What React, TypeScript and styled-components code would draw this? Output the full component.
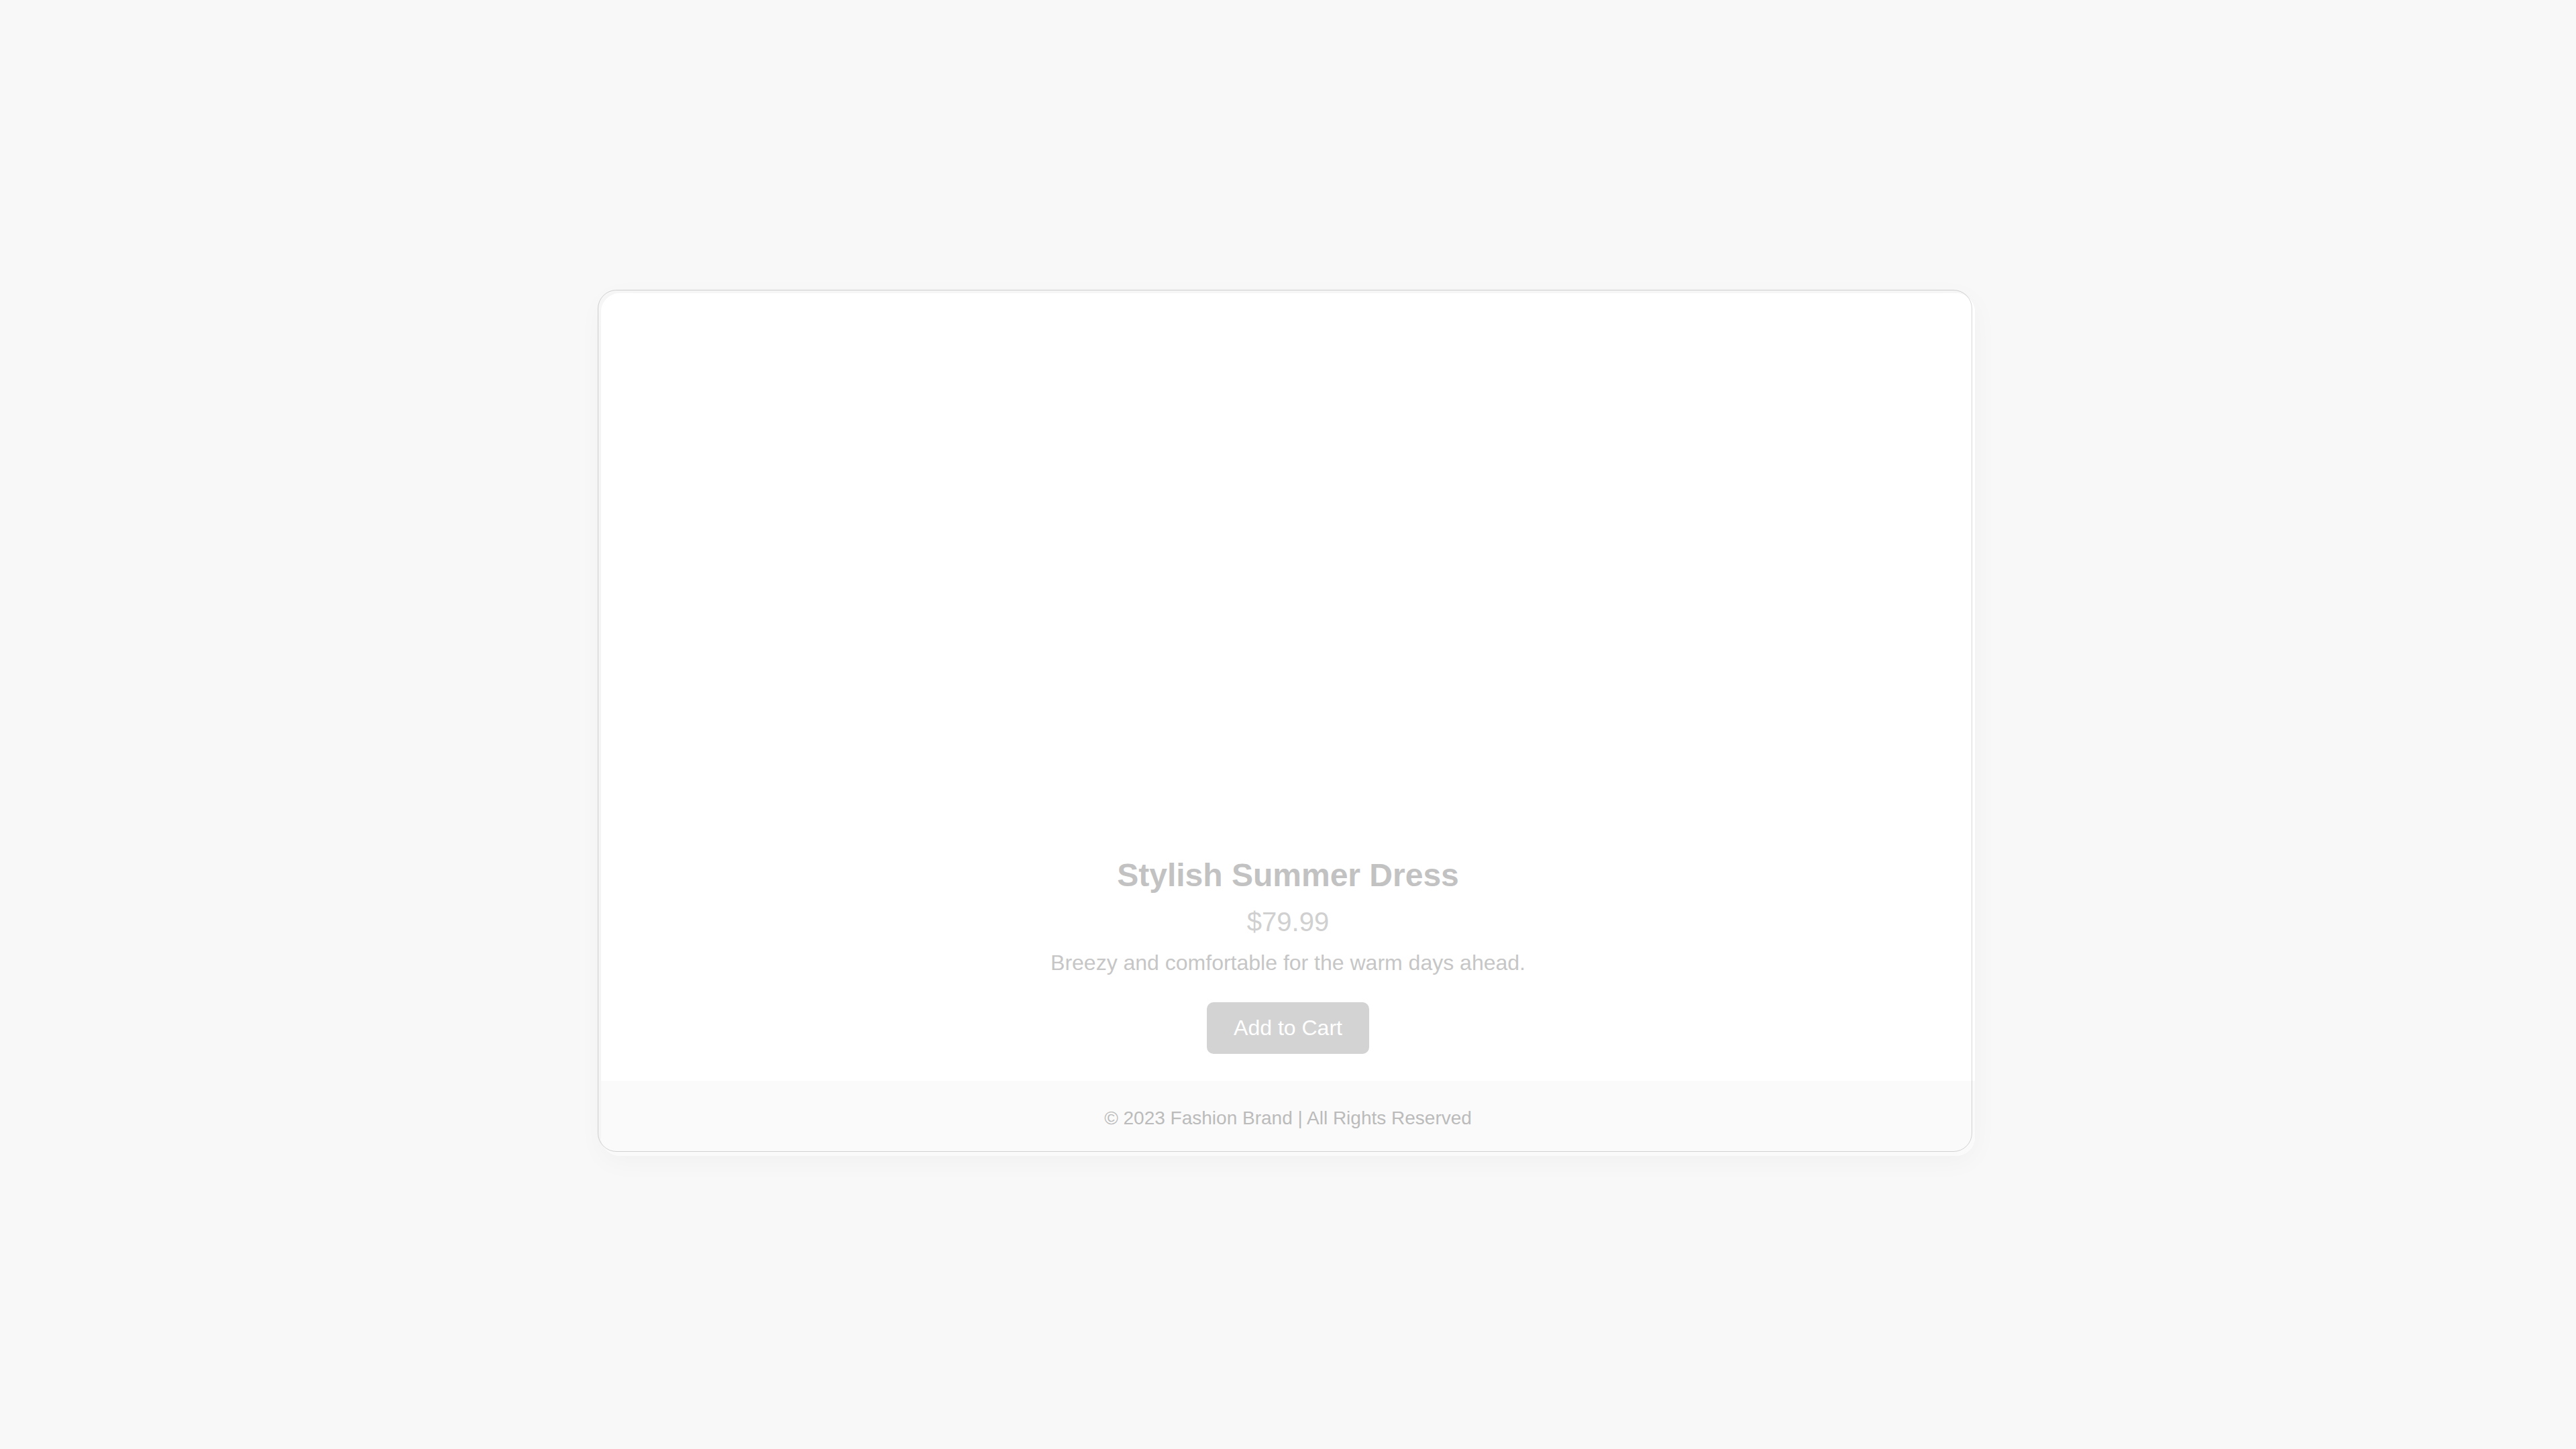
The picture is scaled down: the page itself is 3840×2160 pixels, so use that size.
import styled, { createGlobalStyle } from 'styled-components';

const GlobalStyle = createGlobalStyle`
	html, body {
		margin: 0;
		padding: 0;
		background-color: #f8f8f8;
		font-family: 'Liberation Sans', Arial, sans-serif;
	}
	* {
		box-sizing: border-box;
	}
`;

const product = {
	title: 'Stylish Summer Dress',
	price: '$79.99',
	description: 'Breezy and comfortable for the warm days ahead.',
};

const App = () => {
	return (
		<>
			<GlobalStyle />
			<StyledPage>
				<StyledCard>
					<div className="image" />
					<div className="content">
						<h2 className="title">{product.title}</h2>
						<p className="price">{product.price}</p>
						<p className="description">{product.description}</p>
						<CartButton>Add to Cart</CartButton>
					</div>
					<StyledFooter>© 2023 Fashion Brand | All Rights Reserved</StyledFooter>
				</StyledCard>
			</StyledPage>
		</>
	);
};

const StyledPage = styled.div`
	min-height: 100vh;
	display: flex;
	align-items: center;
	justify-content: center;
`;

const StyledCard = styled.div`
	position: relative;
	width: 2048px;
	background-color: #ffffff;
	border-radius: 28px;
	box-shadow: 0 8px 40px rgba(0, 0, 0, 0.035);
	overflow: visible;

	&::after {
		content: '';
		position: absolute;
		top: -5px;
		left: -5px;
		right: 4px;
		bottom: 6px;
		border: 1.5px solid rgba(0, 0, 0, 0.16);
		border-radius: 28px;
		pointer-events: none;
	}

	& > .image {
		height: 800px;
		border-radius: 28px 28px 0 0;
		background-color: #ffffff;
	}
	& > .content {
		padding: 40px;
		text-align: center;
	}
	& .title {
		margin: 0 0 20px;
		font-size: 48px;
		font-weight: 700;
		color: #c2c2c2;
	}
	& .price {
		margin: 0 0 20px;
		font-size: 40px;
		color: #d0d0d0;
	}
	& .description {
		margin: 0 0 40px;
		font-size: 32px;
		color: #c6c6c6;
	}
`;

const CartButton = styled.button`
	display: inline-block;
	vertical-align: top;
	padding: 20px 40px;
	border: none;
	border-radius: 10px;
	background-color: #d3d3d3;
	color: #ffffff;
	font-family: 'Liberation Sans', Arial, sans-serif;
	font-size: 32px;
	cursor: pointer;
`;

const StyledFooter = styled.footer`
	padding: 40px;
	background-color: #fafafa;
	border-radius: 0 0 28px 28px;
	text-align: center;
	font-size: 28px;
	line-height: 32px;
	color: #bbbbbb;
`;

export default App;
